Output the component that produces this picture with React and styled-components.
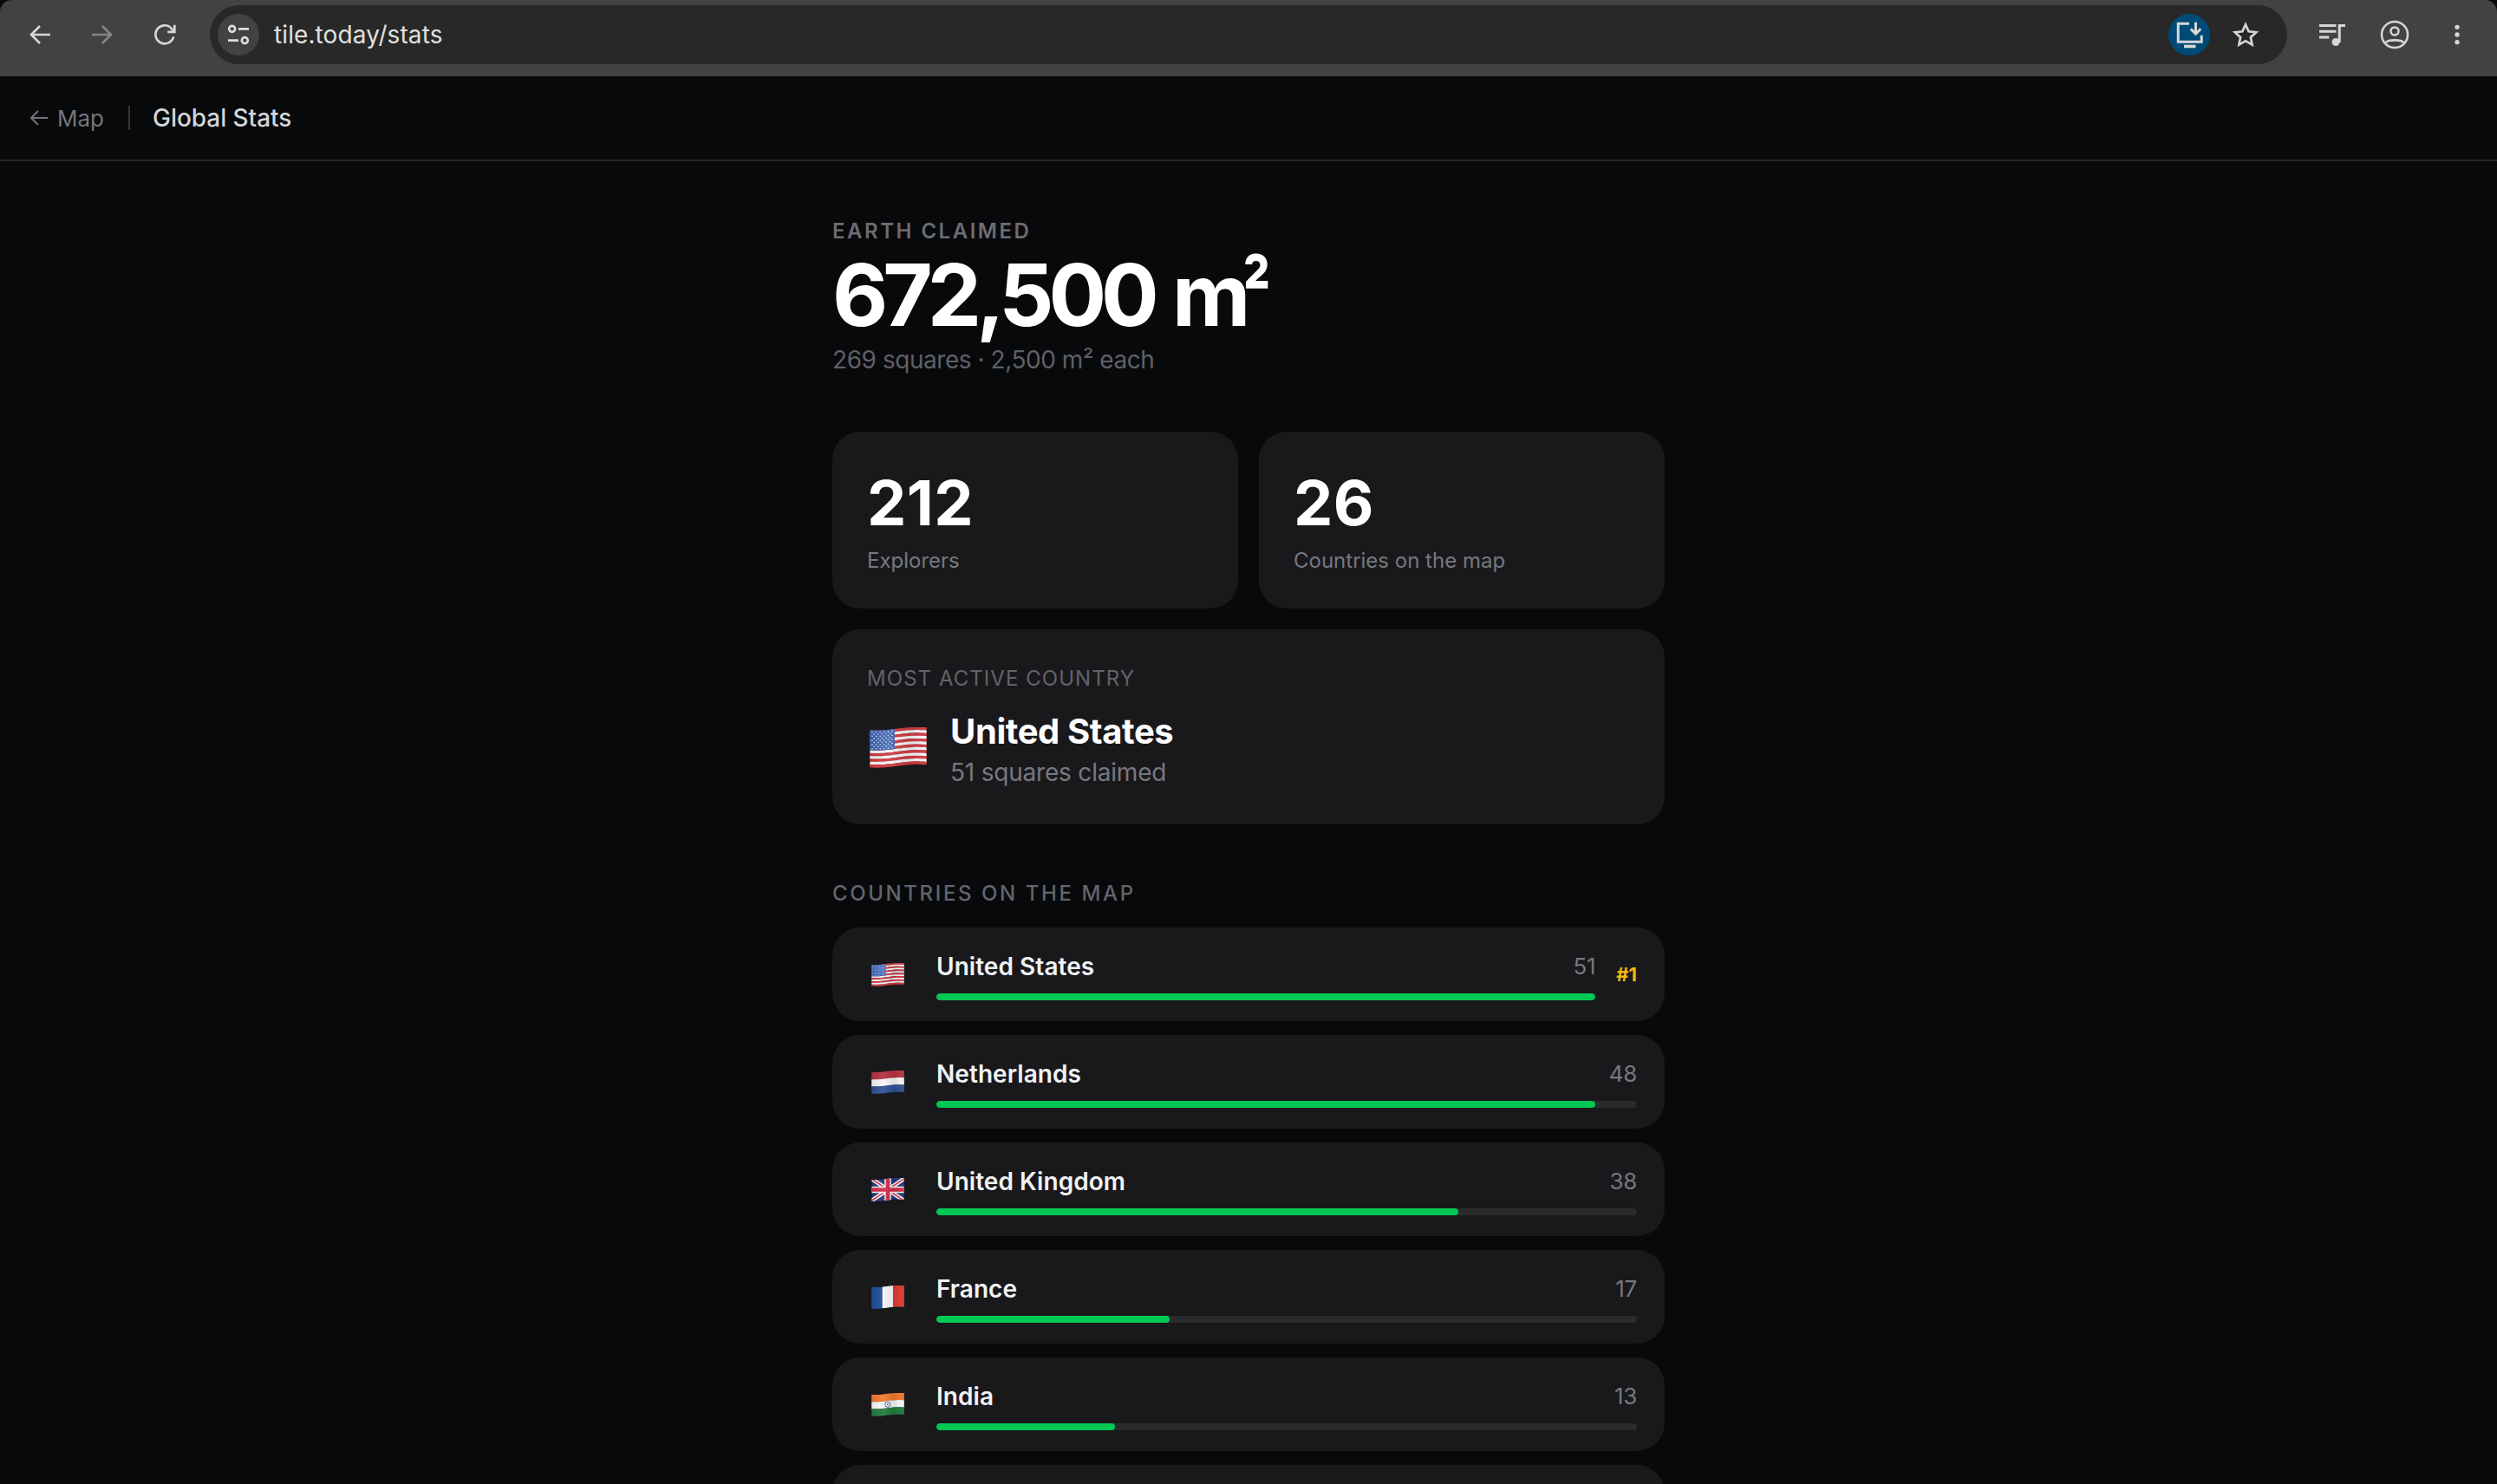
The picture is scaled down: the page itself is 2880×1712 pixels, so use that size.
import React from "react";
import styled, { createGlobalStyle } from "styled-components";

const Global = createGlobalStyle`
  html, body { margin: 0; padding: 0; background: #08090b; }
  body { width: 2880px; height: 1712px; overflow: hidden; font-family: Inter, "Noto Sans", sans-serif; -webkit-font-smoothing: antialiased; }
`;

const Page = styled.div`
  width: 2880px;
  height: 1712px;
  overflow: hidden;
  background: #08090b;
  display: flex;
  flex-direction: column;
`;

const Chrome = styled.header`
  height: 88px;
  flex: none;
  box-sizing: border-box;
  background: #424242;
  border-radius: 14px 14px 0 0;
  display: flex;
  align-items: center;
  padding: 0 10px 8px 10px;
`;
const ChromeGroup = styled.div`
  display: flex;
  align-items: center;
`;
const IconButton = styled.div`
  width: 72px;
  height: 48px;
  display: flex;
  align-items: center;
  justify-content: center;
  color: ${(p) => (p.$dim ? "#858585" : "#d6d6d6")};
`;
const AddressBar = styled.div`
  flex: 1;
  height: 68px;
  margin: 0 16px;
  border-radius: 34px;
  background: #282828;
  display: flex;
  align-items: center;
  padding: 0 24px 0 9px;
`;
const SiteButton = styled.div`
  width: 48px;
  height: 48px;
  border-radius: 50%;
  background: #424242;
  color: #dcdcdc;
  display: flex;
  align-items: center;
  justify-content: center;
`;
const Url = styled.div`
  margin-left: 17px;
  flex: 1;
  font-size: 28px;
  letter-spacing: 0.1px;
  color: #e0e0e0;
`;
const InstallButton = styled.div`
  width: 48px;
  height: 48px;
  border-radius: 50%;
  background: #004a77;
  color: #d8d8d8;
  display: flex;
  align-items: center;
  justify-content: center;
`;
const StarButton = styled.div`
  width: 48px;
  height: 48px;
  margin-left: 17px;
  color: #d6d6d6;
  display: flex;
  align-items: center;
  justify-content: center;
`;

const TopNav = styled.nav`
  height: 98px;
  flex: none;
  box-sizing: border-box;
  border-bottom: 2px solid #26272a;
  display: flex;
  align-items: center;
  padding-left: 34px;
`;
const BackLink = styled.div`
  display: flex;
  align-items: center;
  gap: 10px;
  color: #74757c;
  font-size: 26px;
`;
const Divider = styled.div`
  width: 2px;
  height: 28px;
  margin: 0 26px 0 28px;
  background: #35363a;
`;
const NavTitle = styled.div`
  color: #d4d4d8;
  font-size: 28px;
  font-weight: 500;
  letter-spacing: -0.05px;
`;

const Main = styled.main`
  width: 960px;
  margin: 0 auto;
  padding-top: 64px;
`;
const HeroLabel = styled.div`
  font-size: 24px;
  line-height: 34px;
  font-weight: 600;
  letter-spacing: 2.5px;
  color: #6b6c74;
`;
const HeroValue = styled.div`
  margin-top: 4px;
  font-size: 99px;
  line-height: 104px;
  font-weight: 700;
  letter-spacing: -6.1px;
  word-spacing: 4px;
  color: #fff;
`;
const Squared = styled.span`
  display: inline-block;
  margin-left: -3px;
  transform: scaleX(0.72);
  transform-origin: left center;
`;
const HeroSub = styled.div`
  margin-top: 3px;
  font-size: 28px;
  line-height: 40px;
  letter-spacing: -0.45px;
  color: #5f6068;
`;
const StatGrid = styled.div`
  margin-top: 63px;
  display: grid;
  grid-template-columns: 1fr 1fr;
  gap: 24px;
`;
const Card = styled.section`
  background: #19191c;
  border-radius: 32px;
  box-sizing: border-box;
`;
const StatCard = styled(Card)`
  height: 204px;
  padding: 42px 40px 0;
`;
const StatValue = styled.div`
  font-size: 72px;
  line-height: 80px;
  font-weight: 700;
  letter-spacing: 0.4px;
  color: #fff;
`;
const StatLabel = styled.div`
  margin-top: 9px;
  font-size: 24px;
  line-height: 36px;
  color: #77787f;
`;
const ActiveCard = styled(Card)`
  margin-top: 24px;
  height: 225px;
  padding: 40px 40px 0;
`;
const ActiveLabel = styled.div`
  font-size: 24px;
  line-height: 34px;
  letter-spacing: 1.05px;
  color: #62636a;
`;
const ActiveRow = styled.div`
  margin-top: 17px;
  display: flex;
  align-items: center;
`;
const BigFlagCell = styled.div`
  flex: none;
  width: 96px;
  padding-left: 3px;
  box-sizing: border-box;
  margin-top: -4px;
`;
const ActiveName = styled.div`
  font-size: 40px;
  line-height: 54px;
  font-weight: 700;
  letter-spacing: -0.4px;
  color: #fff;
`;
const ActiveSub = styled.div`
  font-size: 28px;
  line-height: 40px;
  letter-spacing: -0.2px;
  color: #77787f;
`;
const SectionLabel = styled.h2`
  margin: 63px 0 22px;
  font-size: 24px;
  line-height: 34px;
  font-weight: 500;
  letter-spacing: 2.6px;
  color: #63646c;
`;
const List = styled.div`
  display: flex;
  flex-direction: column;
  gap: 16px;
`;
const Row = styled(Card)`
  height: 108px;
  flex: none;
  display: flex;
  align-items: center;
  gap: 32px;
  padding: 0 32px 0 40px;
`;
const FlagCell = styled.div`
  width: 48px;
  flex: none;
  display: flex;
  justify-content: center;
`;
const RowBody = styled.div`
  flex: 1;
  min-width: 0;
`;
const RowHead = styled.div`
  display: flex;
  justify-content: space-between;
  align-items: center;
  height: 36px;
  margin-top: 2px;
`;
const RowName = styled.div`
  font-size: 28px;
  font-weight: 600;
  letter-spacing: 0.05px;
  color: #f2f2f3;
`;
const RowCount = styled.div`
  font-size: 26px;
  letter-spacing: -0.3px;
  color: #77787f;
`;
const Track = styled.div`
  margin-top: 13px;
  height: 8px;
  border-radius: 4px;
  background: #2a2b2d;
  overflow: hidden;
`;
const Fill = styled.div`
  height: 100%;
  border-radius: 4px;
  background: #00c853;
`;
const Rank = styled.div`
  flex: none;
  margin-left: -8px;
  font-size: 22px;
  font-weight: 700;
  color: #f5b70f;
`;
const FlagSvg = styled.svg`
  display: block;
  width: ${(p) => p.$w}px;
  height: ${(p) => Math.round((p.$w * 46) / 64)}px;
`;

/* Flag geometry: every stripe follows the same gentle wave. */
const wave = (u) => 1.6 * Math.sin(u * Math.PI * 1.5 + 0.9) - 0.8 * u;
const band = (x0, x1, y0, y1) => {
  const pts = [];
  const n = 20;
  for (let i = 0; i <= n; i++) {
    const x = x0 + ((x1 - x0) * i) / n;
    pts.push(`${x.toFixed(2)},${(y0 + wave(x / 64)).toFixed(2)}`);
  }
  for (let i = n; i >= 0; i--) {
    const x = x0 + ((x1 - x0) * i) / n;
    pts.push(`${x.toFixed(2)},${(y1 + wave(x / 64)).toFixed(2)}`);
  }
  return `M${pts.join("L")}Z`;
};
const H = [2, 44];
const stripes = (colors) => {
  const h = (H[1] - H[0]) / colors.length;
  return colors.map((c, i) => <path key={i} d={band(0, 64, H[0] + i * h, H[0] + (i + 1) * h + 0.2)} fill={c} />);
};

function FlagArt({ code, id }) {
  if (code === "us") {
    const cols = Array.from({ length: 13 }, (_, i) => (i % 2 ? "#f4f4f6" : "#d0383f"));
    const stars = [];
    for (let r = 0; r < 9; r++)
      for (let c = 0; c < (r % 2 ? 5 : 6); c++) {
        const x = 2.6 + c * 4.5 + (r % 2 ? 2.25 : 0);
        stars.push(<circle key={`${r}-${c}`} cx={x} cy={4 + r * 2.35 + wave(x / 64)} r="0.8" fill="#eef0f6" />);
      }
    return (
      <>
        {stripes(cols)}
        <path d={band(0, 28, H[0], H[0] + 22.6)} fill="#3a62b4" />
        {stars}
      </>
    );
  }
  if (code === "nl") return stripes(["#b4323f", "#f3f3f5", "#2f4f94"]);
  if (code === "fr")
    return (
      <>
        <path d={band(0, 21.5, H[0], H[1])} fill="#1d4f9c" />
        <path d={band(21.3, 42.7, H[0], H[1])} fill="#f5f5f7" />
        <path d={band(42.5, 64, H[0], H[1])} fill="#dd3a2f" />
      </>
    );
  if (code === "in")
    return (
      <>
        {stripes(["#f0772b", "#f5f5f5", "#1f7a3d"])}
        <circle cx="32" cy={23 + wave(0.5)} r="5.4" fill="none" stroke="#33408f" strokeWidth="1.4" />
        <circle cx="32" cy={23 + wave(0.5)} r="1.6" fill="#33408f" />
      </>
    );
  return (
    <>
      <clipPath id={id}>
        <path d={band(0, 64, H[0], H[1])} />
      </clipPath>
      <g clipPath={`url(#${id})`}>
        <path d={band(0, 64, H[0] - 3, H[1] + 3)} fill="#25357f" />
        <path d="M-2 0L66 46M66 0L-2 46" stroke="#f3f3f5" strokeWidth="8" />
        <path d="M-2 0L66 46M66 0L-2 46" stroke="#d12a44" strokeWidth="2.6" />
        <path d="M32 0V46M0 23H64" stroke="#f3f3f5" strokeWidth="13" />
        <path d="M32 0V46M0 23H64" stroke="#d12a44" strokeWidth="8" />
      </g>
    </>
  );
}

function Flag({ code, size }) {
  const id = `flag-${code}-${size}`;
  return (
    <FlagSvg $w={size} viewBox="0 0 64 46" aria-hidden="true">
      <defs>
        <linearGradient id={`${id}-shade`} x1="0" y1="0" x2="1" y2="0">
          <stop offset="0" stopColor="#000" stopOpacity="0.06" />
          <stop offset="0.35" stopColor="#fff" stopOpacity="0.08" />
          <stop offset="0.7" stopColor="#000" stopOpacity="0.08" />
          <stop offset="1" stopColor="#fff" stopOpacity="0.05" />
        </linearGradient>
      </defs>
      <FlagArt code={code} id={`${id}-clip`} />
      <path d={band(0, 64, H[0], H[1])} fill={`url(#${id}-shade)`} />
    </FlagSvg>
  );
}

const Svg = ({ size = 32, vb = "0 0 24 24", children }) => (
  <svg width={size} height={size} viewBox={vb} fill="none" stroke="currentColor" strokeWidth="2" aria-hidden="true">
    {children}
  </svg>
);
const BackIcon = () => (
  <Svg>
    <path d="M21 12H4.5M12 4.5L4.5 12L12 19.5" />
  </Svg>
);
const ForwardIcon = () => (
  <Svg>
    <path d="M3 12H19.5M12 4.5L19.5 12L12 19.5" />
  </Svg>
);
const ReloadIcon = () => (
  <Svg>
    <path d="M19.6 13.8A7.9 7.9 0 1 1 18 6.8L20 9" />
    <path d="M20.5 3.5V9.6H14.4" />
  </Svg>
);
const TuneIcon = () => (
  <Svg>
    <circle cx="6.5" cy="7" r="2.6" />
    <path d="M12 7H21M3 17H12" />
    <circle cx="17.5" cy="17" r="2.6" />
  </Svg>
);
const InstallIcon = () => (
  <svg width="36" height="36" viewBox="0 0 24 24" fill="none" stroke="currentColor" strokeWidth="2" aria-hidden="true">
    <path d="M12 3.5H3.5V17.5H21.5V12.5" />
    <path d="M8 21H17" strokeWidth="2.4" />
    <path d="M17 2.5V11M13.2 7.6L17 11.4L20.8 7.6" />
  </svg>
);
const StarIcon = () => (
  <Svg>
    <path d="M12 3.2L14.7 9.2L21.2 9.9L16.4 14.3L17.7 20.7L12 17.4L6.3 20.7L7.6 14.3L2.8 9.9L9.3 9.2Z" strokeLinejoin="miter" />
  </Svg>
);
const QueueIcon = () => (
  <Svg size={36}>
    <path d="M2 5H15M2 9.5H15M2 14H9.5" />
    <path d="M17.5 18V5H22" />
    <circle cx="14.7" cy="17.7" r="3" fill="currentColor" stroke="none" />
  </Svg>
);
const ProfileIcon = () => (
  <Svg size={36}>
    <circle cx="12" cy="12" r="10" strokeWidth="1.7" />
    <circle cx="12" cy="9.3" r="3" strokeWidth="1.7" />
    <path d="M5 18.2C7 15.6 17 15.6 19 18.2" strokeWidth="1.7" />
  </Svg>
);
const DotsIcon = () => (
  <Svg>
    <g fill="currentColor" stroke="none">
      <circle cx="12" cy="5.5" r="2" />
      <circle cx="12" cy="12" r="2" />
      <circle cx="12" cy="18.5" r="2" />
    </g>
  </Svg>
);
const SmallArrow = () => (
  <svg width="22" height="22" viewBox="0 0 22 22" fill="none" stroke="currentColor" strokeWidth="2" aria-hidden="true">
    <path d="M21 11H2M10 3L2 11L10 19" />
  </svg>
);

const countries = [
  { code: "us", name: "United States", count: 51, pct: 100, rank: "#1" },
  { code: "nl", name: "Netherlands", count: 48, pct: 94.1 },
  { code: "gb", name: "United Kingdom", count: 38, pct: 74.5 },
  { code: "fr", name: "France", count: 17, pct: 33.3 },
  { code: "in", name: "India", count: 13, pct: 25.5 },
];

export default function App() {
  return (
    <Page>
      <Global />
      <Chrome>
        <ChromeGroup>
          <IconButton><BackIcon /></IconButton>
          <IconButton $dim><ForwardIcon /></IconButton>
          <IconButton><ReloadIcon /></IconButton>
        </ChromeGroup>
        <AddressBar>
          <SiteButton><TuneIcon /></SiteButton>
          <Url>tile.today/stats</Url>
          <InstallButton><InstallIcon /></InstallButton>
          <StarButton><StarIcon /></StarButton>
        </AddressBar>
        <ChromeGroup>
          <IconButton><QueueIcon /></IconButton>
          <IconButton><ProfileIcon /></IconButton>
          <IconButton><DotsIcon /></IconButton>
        </ChromeGroup>
      </Chrome>
      <TopNav>
        <BackLink><SmallArrow />Map</BackLink>
        <Divider />
        <NavTitle>Global Stats</NavTitle>
      </TopNav>
      <Main>
        <HeroLabel>EARTH CLAIMED</HeroLabel>
        <HeroValue>672,500 m<Squared>²</Squared></HeroValue>
        <HeroSub>269 squares · 2,500 m² each</HeroSub>
        <StatGrid>
          <StatCard>
            <StatValue>212</StatValue>
            <StatLabel>Explorers</StatLabel>
          </StatCard>
          <StatCard>
            <StatValue>26</StatValue>
            <StatLabel>Countries on the map</StatLabel>
          </StatCard>
        </StatGrid>
        <ActiveCard>
          <ActiveLabel>MOST ACTIVE COUNTRY</ActiveLabel>
          <ActiveRow>
            <BigFlagCell><Flag code="us" size={66} /></BigFlagCell>
            <div>
              <ActiveName>United States</ActiveName>
              <ActiveSub>51 squares claimed</ActiveSub>
            </div>
          </ActiveRow>
        </ActiveCard>
        <SectionLabel>COUNTRIES ON THE MAP</SectionLabel>
        <List>
          {countries.map((c) => (
            <Row key={c.code}>
              <FlagCell><Flag code={c.code} size={38} /></FlagCell>
              <RowBody>
                <RowHead>
                  <RowName>{c.name}</RowName>
                  <RowCount>{c.count}</RowCount>
                </RowHead>
                <Track><Fill style={{ width: `${c.pct}%` }} /></Track>
              </RowBody>
              {c.rank && <Rank>{c.rank}</Rank>}
            </Row>
          ))}
          <Row />
        </List>
      </Main>
    </Page>
  );
}
